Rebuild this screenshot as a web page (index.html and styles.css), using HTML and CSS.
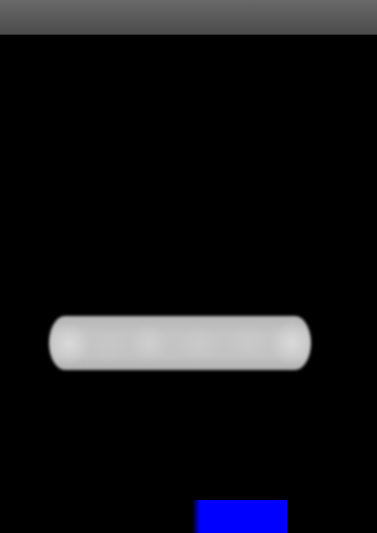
FILE: index.html
```html
<!DOCTYPE html>
<html>
<head>
<meta charset="utf-8">
<link rel="stylesheet" href="styles.css">
</head>
<body>
<header class="topbar"></header>
<main class="stage">
  <div class="pill"></div>
  <div class="blue"></div>
</main>
</body>
</html>
```
FILE: styles.css
```css
html, body {
  margin: 0;
  padding: 0;
  background: #000;
  width: 377px;
  height: 533px;
  overflow: hidden;
  font-family: "Liberation Sans", sans-serif;
}
.topbar {
  height: 34px;
  background: linear-gradient(to bottom, #696969, #4b4b4b);
  border-bottom: 1px solid #323232;
}
.stage {
  display: flex;
  flex-direction: column;
}
.pill {
  margin-top: 281px;
  margin-left: 49px;
  width: 262px;
  height: 54px;
  border-radius: 16px / 27px;
  background:
    radial-gradient(ellipse 22px 22px at 20px 28px, rgba(222,222,222,0.85), rgba(222,222,222,0)),
    radial-gradient(ellipse 22px 22px at 243px 27px, rgba(222,222,222,0.85), rgba(222,222,222,0)),
    radial-gradient(ellipse 20px 20px at 100px 27px, rgba(216,216,216,0.55), rgba(216,216,216,0)),
    radial-gradient(ellipse 24px 18px at 150px 28px, rgba(210,210,210,0.45), rgba(210,210,210,0)),
    radial-gradient(ellipse 26px 18px at 200px 26px, rgba(210,210,210,0.4), rgba(210,210,210,0)),
    radial-gradient(ellipse 22px 18px at 60px 30px, rgba(205,205,205,0.35), rgba(205,205,205,0)),
    linear-gradient(to bottom, #b6b6b6, #c4c4c4 35%, #c2c2c2 75%, #b2b2b2);
  filter: blur(1.6px);
}
.blue {
  margin-top: 130px;
  margin-left: 192px;
  width: 95px;
  height: 40px;
  background: linear-gradient(to right, rgba(0,0,255,0), #0000ff 8px);
}
```
